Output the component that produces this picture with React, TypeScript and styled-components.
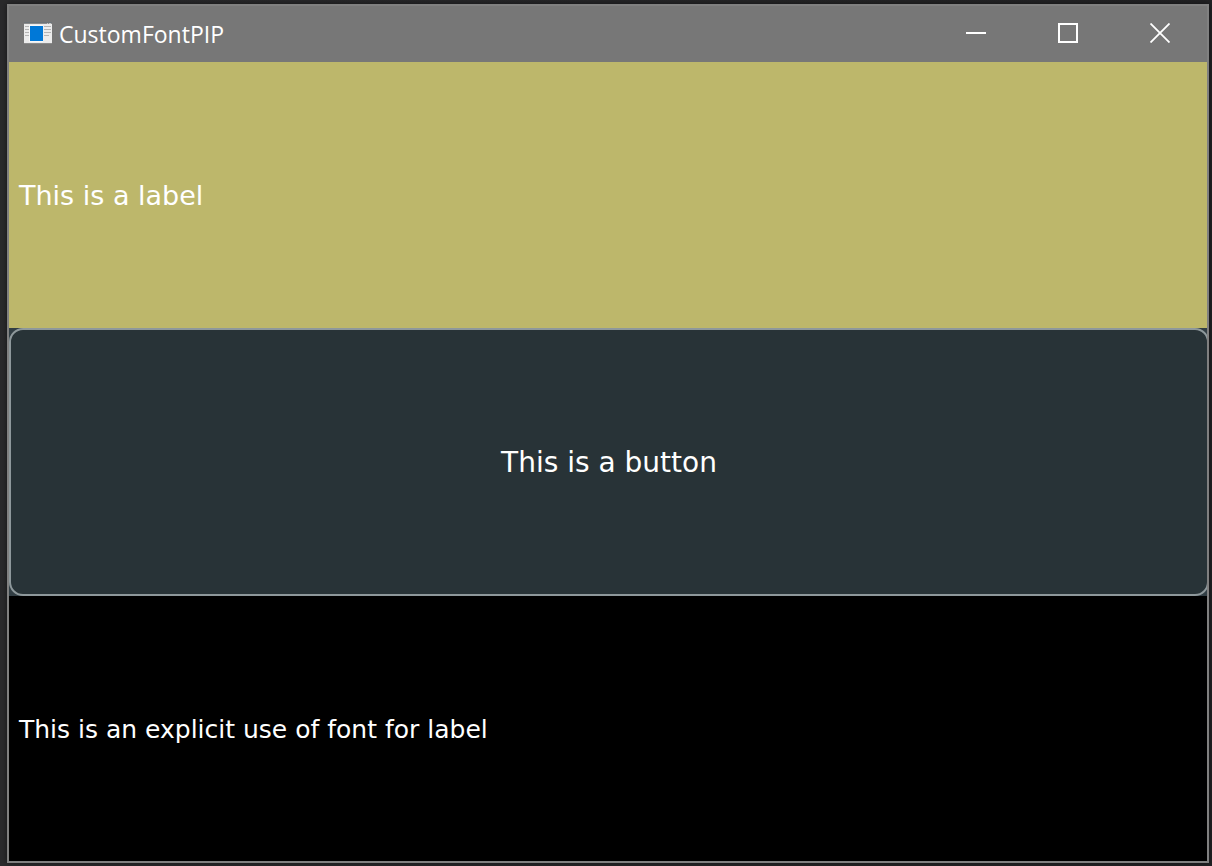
import React from "react";
import styled, { createGlobalStyle } from "styled-components";

const GlobalStyle = createGlobalStyle`
  * { box-sizing: border-box; }
  html, body, #root { height: 100%; }
  body { margin: 0; background: #252527; }
`;

const Desktop = styled.div`
  min-height: 100%;
  display: grid;
  padding: 4px 3px 3px 7px;
  background: linear-gradient(90deg, #2a2a2c, #222224);
`;

const Window = styled.main`
  display: grid;
  grid-template-rows: 56px 266fr 268fr 265fr;
  min-width: 0;
  border: 2px solid #808080;
  background: #323e44;
  box-shadow: 0 0 6px rgba(0, 0, 0, 0.5);
  overflow: hidden;
`;

const TitleBar = styled.header`
  display: flex;
  align-items: center;
  gap: 7px;
  padding: 0 1px 2px 15px;
  background: #777777;
`;

const Title = styled.h1`
  margin: 0;
  padding-top: 2px;
  flex: 1;
  color: #ffffff;
  font: 400 23px/32px "Open Sans", "Noto Sans", sans-serif;
`;

const Controls = styled.div`
  display: flex;
  align-self: stretch;
`;

const Control = styled.button`
  display: grid;
  place-items: center;
  width: 92px;
  padding: 0;
  border: 0;
  background: transparent;
  color: #ffffff;
`;

const Label = styled.p<{ $fill: string; $size: number }>`
  display: flex;
  align-items: center;
  margin: 0;
  padding: 2px 0 0 10px;
  background: ${(p) => p.$fill};
  color: #ffffff;
  font: 400 ${(p) => p.$size}px/32px "DejaVu Sans", sans-serif;
`;

const TextButton = styled.button`
  margin-right: -2px;
  padding: 2px 0 0;
  border: 2px solid #8e989b;
  border-radius: 14px;
  background: #283337;
  color: #ffffff;
  font: 400 28px/32px "DejaVu Sans", sans-serif;
`;

const AppIcon = () => (
  <svg width="28" height="22" viewBox="0 0 28 22" aria-hidden="true" shapeRendering="crispEdges">
    <rect width="28" height="22" fill="#8b8b8b" />
    <rect y="2" width="28" height="19" fill="#ececec" />
    <rect width="28" height="1" fill="#6c7378" />
    <path d="M23 1.500h1M25 1.500h2" stroke="#c5c5c5" />
    <path d="M1 4.500h4M1 7.500h4M1 10.500h4M1 13.500h4M20 4.500h7M20 7.500h7M20 10.500h7M20 13.500h5" stroke="#b4b4b4" />
    <rect x="5" y="3" width="14" height="17" fill="#f8f8f8" />
    <rect x="6" y="4" width="13" height="15" fill="#0078d7" />
  </svg>
);

const controls = [
  { name: "Minimize", path: "M0 10H20", stroke: 2 },
  { name: "Maximize", path: "M1 1H19V19H1Z", stroke: 2 },
  { name: "Close", path: "M0.500 0.500L19.500 19.500M19.500 0.500L0.500 19.500", stroke: 1.8 },
];

export default function App() {
  return (
    <>
      <GlobalStyle />
      <Desktop>
        <Window>
          <TitleBar>
            <AppIcon />
            <Title>CustomFontPIP</Title>
            <Controls>
              {controls.map((c) => (
                <Control key={c.name} type="button" aria-label={c.name}>
                  <svg width="20" height="20" viewBox="0 0 20 20" fill="none" stroke="currentColor" strokeWidth={c.stroke}>
                    <path d={c.path} />
                  </svg>
                </Control>
              ))}
            </Controls>
          </TitleBar>
          <Label $fill="#bdb76b" $size={27}>This is a label</Label>
          <TextButton type="button">This is a button</TextButton>
          <Label $fill="#000000" $size={25}>This is an explicit use of font for label</Label>
        </Window>
      </Desktop>
    </>
  );
}
